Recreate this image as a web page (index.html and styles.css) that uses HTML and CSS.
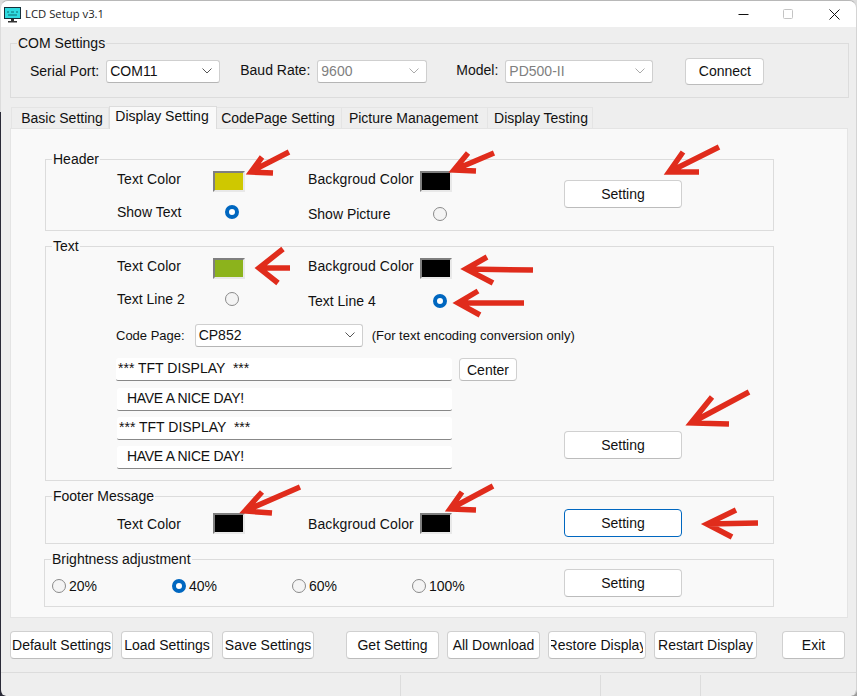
FILE: index.html
```html
<!DOCTYPE html>
<html lang="en">
<head>
<meta charset="utf-8">
<title>LCD Setup v3.1</title>
<link rel="stylesheet" href="styles.css">
</head>
<body>
<div class="window">
  <header class="titlebar">
    <svg class="appicon" width="17" height="16" viewBox="0 0 17 16"><rect x="0.5" y="0.5" width="16" height="11" fill="#2fdbe0" stroke="#17303a"/><path d="M3 5h2M7 5h3M12 5h2M4 8h9" stroke="#0d6b70" stroke-width="1"/><rect x="7" y="12" width="3" height="2" fill="#333"/><rect x="4" y="14" width="9" height="1.5" fill="#333"/></svg>
    <span class="title">LCD Setup v3.1</span>
    <div class="winctl">
      <svg width="11" height="11" viewBox="0 0 11 11"><path d="M0.5 5.5h10" stroke="#111" stroke-width="1"/></svg>
      <svg class="wmax" width="11" height="11" viewBox="0 0 11 11"><rect x="1.5" y="0.5" width="9" height="9" rx="1" fill="none" stroke="#c4c4c4"/></svg>
      <svg class="wclose" width="11" height="11" viewBox="0 0 11 11"><path d="M0.5 0.5l10 10M10.5 0.5l-10 10" stroke="#111" stroke-width="1"/></svg>
    </div>
  </header>

  <section class="group com">
    <div class="legend">COM Settings</div>
    <div class="comrow">
      <span class="lbl serial">Serial Port:</span>
      <div class="combo c-serial"><span>COM11</span><svg class="chev" width="10" height="6" viewBox="0 0 10 6"><path d="M0.5 0.5l4.5 4.5 4.5-4.5" fill="none" stroke="#555"/></svg></div>
      <span class="lbl baud">Baud Rate:</span>
      <div class="combo c-baud disabled"><span>9600</span><svg class="chev" width="10" height="6" viewBox="0 0 10 6"><path d="M0.5 0.5l4.5 4.5 4.5-4.5" fill="none" stroke="#aaa"/></svg></div>
      <span class="lbl model">Model:</span>
      <div class="combo c-model disabled"><span>PD500-II</span><svg class="chev" width="10" height="6" viewBox="0 0 10 6"><path d="M0.5 0.5l4.5 4.5 4.5-4.5" fill="none" stroke="#aaa"/></svg></div>
      <div class="btn connect">Connect</div>
    </div>
  </section>

  <nav class="tabs">
    <div class="tab t1">Basic Setting</div>
    <div class="tab t2 active">Display Setting</div>
    <div class="tab t3">CodePage Setting</div>
    <div class="tab t4">Picture Management</div>
    <div class="tab t5">Display Testing</div>
  </nav>

  <main class="panel">
    <section class="group inner g-header">
      <div class="legend">Header</div>
      <div class="fields">
        <span class="lbl up">Text Color</span><div class="swatch yellow"></div>
        <span class="lbl up">Backgroud Color</span><div class="swatch black"></div>
        <div class="btn setting s-header">Setting</div>
        <span class="lbl low">Show Text</span><div class="radio on low-r"></div>
        <span class="lbl low2">Show Picture</span><div class="radio low2-r"></div>
      </div>
    </section>

    <section class="group inner g-text">
      <div class="legend">Text</div>
      <div class="fields">
        <span class="lbl up">Text Color</span><div class="swatch green"></div>
        <span class="lbl up">Backgroud Color</span><div class="swatch black"></div>
        <span class="lbl low">Text Line 2</span><div class="radio low-r"></div>
        <span class="lbl low2">Text Line 4</span><div class="radio on low2-r"></div>
      </div>
      <div class="coderow">
        <span class="lbl small">Code Page:</span>
        <div class="combo c-code"><span>CP852</span><svg class="chev" width="10" height="6" viewBox="0 0 10 6"><path d="M0.5 0.5l4.5 4.5 4.5-4.5" fill="none" stroke="#555"/></svg></div>
        <span class="lbl small note">(For text encoding conversion only)</span>
      </div>
      <div class="lines">
        <div class="lineblock">
          <div class="line first">*** TFT DISPLAY  ***</div>
          <div class="line ind second">HAVE A NICE DAY!</div>
          <div class="line">*** TFT DISPLAY  ***</div>
          <div class="line ind">HAVE A NICE DAY!</div>
        </div>
        <div class="btn center">Center</div>
        <div class="btn setting s-text">Setting</div>
      </div>
    </section>

    <section class="group inner g-footer">
      <div class="legend">Footer Message</div>
      <div class="fields">
        <span class="lbl up">Text Color</span><div class="swatch black"></div>
        <span class="lbl up">Backgroud Color</span><div class="swatch black"></div>
        <div class="btn setting s-footer focus">Setting</div>
      </div>
    </section>

    <section class="group inner g-bright">
      <div class="legend">Brightness adjustment</div>
      <div class="brow">
        <label class="opt"><span class="radio"></span><span class="lbl">20%</span></label>
        <label class="opt"><span class="radio on"></span><span class="lbl">40%</span></label>
        <label class="opt"><span class="radio"></span><span class="lbl">60%</span></label>
        <label class="opt"><span class="radio"></span><span class="lbl">100%</span></label>
        <div class="btn setting s-bright">Setting</div>
      </div>
    </section>
  </main>

  <div class="actions">
    <div class="btn b103">Default Settings</div>
    <div class="btn b92">Load Settings</div>
    <div class="btn b92 m1">Save Settings</div>
    <div class="btn b93 m24">Get Setting</div>
    <div class="btn b93">All Download</div>
    <div class="btn b98"><span class="clip">Restore Display</span></div>
    <div class="btn b103">Restart Display</div>
    <div class="btn b63 m17">Exit</div>
  </div>

  <footer class="status">
    <div class="cell c400"></div>
    <div class="cell c200"></div>
    <div class="cell c100"></div>
    <div class="cell"></div>
  </footer>

  <svg class="arrows" width="857" height="696" viewBox="0 0 857 696" fill="none" stroke="#e02c1c" stroke-width="5.5" stroke-linecap="butt" stroke-linejoin="miter">
    <path d="M289 152L252 171M262 157L251 172L273 173"/>
    <path d="M494 153L454 170M468 153L454 170L476 171"/>
    <path d="M719 147L669 172M683 152L669 172L699 172"/>
    <path d="M290 268L259 268M283 249L259 268L278 283"/>
    <path d="M533 270L466 269M487 257L466 269L493 283"/>
    <path d="M524 303L458 303M478 291L458 303L480 315"/>
    <path d="M749 392L691 423M712 397L691 423L729 424"/>
    <path d="M300 487L245 511M262 492L245 511L272 513"/>
    <path d="M493 486L450 509M462 492L450 509L476 510"/>
    <path d="M758 523L707 524M736 510L707 524L732 537"/>
  </svg>
</div>
</body>
</html>
```
FILE: styles.css
```css
* { box-sizing: border-box; }
html, body { margin: 0; padding: 0; }
body { width: 857px; height: 696px; overflow: hidden; font-family: "Liberation Sans", Arial, sans-serif; font-size: 14px; color: #111; background: linear-gradient(#dcdcdc 0 112px, transparent 112px), linear-gradient(90deg, #2b2b38 50%, #9a9a9a 50%); }
.window { position: relative; width: 857px; height: 696px; background: #eeeeee; background-clip: padding-box; border-radius: 8px 8px 6px 6px; border-top: 1px solid #b8b8b8; border-left: 1px solid transparent; border-right: 1px solid #d4d4d4; overflow: hidden; display: flex; flex-direction: column; }

.titlebar { height: 26px; flex: none; background: #fff; display: flex; align-items: center; padding-left: 3px; }
.appicon { flex: none; margin-top: 1px; }
.title { margin-left: 4px; margin-bottom: 1px; font-family: "Open Sans", sans-serif; font-size: 11.3px; color: #222; }
.winctl { margin-left: auto; display: flex; padding-right: 16px; }
.wmax { margin-left: 33px; }
.wclose { margin-left: 36px; }

.group { border: 1px solid #dcdcdc; }
.legend { display: block; width: fit-content; height: 16px; line-height: 16px; margin: -9px 0 0 6px; padding: 0 1px; background: #eeeeee; white-space: nowrap; }
.lbl { white-space: nowrap; }

.com { margin: 16px 7px 0 9px; height: 55px; flex: none; }
.comrow { display: flex; align-items: center; padding-left: 19px; height: 26px; margin-top: 7px; }
.combo { height: 23px; border: 1px solid #cfcfcf; border-bottom-color: #b5b5b5; border-radius: 3px; background: #fff; display: flex; align-items: center; justify-content: space-between; padding: 0 7px 0 3px; flex: none; }
.combo.disabled { color: #808080; }
.chev { flex: none; }
.serial { margin-right: 7px; }
.c-serial { width: 114px; }
.baud { margin-left: 20px; margin-right: 7px; margin-bottom: 2px; }
.c-baud { width: 110px; }
.model { margin-left: 29px; margin-right: 7px; margin-bottom: 2px; }
.c-model { width: 148px; }
.btn { display: flex; align-items: center; justify-content: center; background: #fff; border: 1px solid #d0d0d0; border-bottom-color: #bcbcbc; border-radius: 4px; white-space: nowrap; overflow: hidden; flex: none; }
.clip { width: 92px; flex: none; display: flex; justify-content: center; overflow: hidden; white-space: nowrap; }
.connect { width: 79px; height: 27px; margin-left: 32px; }

.tabs { display: flex; margin: 8px 0 0 10px; height: 22px; align-items: flex-end; flex: none; position: relative; z-index: 1; }
.tab { height: 21px; border: 1px solid #e4e4e4; border-bottom: none; border-left: none; display: flex; align-items: center; justify-content: center; background: #eeeeee; white-space: nowrap; }
.tab.t1 { width: 98px; border-left: 1px solid #e4e4e4; padding-left: 4px; }
.t2 { width: 108px; }
.t3 { width: 125px; padding-right: 2px; }
.t4 { width: 146px; padding-right: 2px; }
.t5 { width: 105px; padding-left: 2px; }
.tab.active { height: 23px; margin-bottom: -1px; background: #f9f9f9; padding-bottom: 5px; padding-right: 2px; border-left: 1px solid #dcdcdc; border-right: 1px solid #dcdcdc; border-top-color: #dcdcdc; }

.panel { margin-left: 9px; width: 838px; height: 490px; flex: none; background: #f9f9f9; border: 1px solid #e4e4e4; padding: 30px 0 0 34px; }
.inner { width: 729px; }
.inner .legend { background: #f9f9f9; }

.fields { display: grid; grid-template-columns: 96px 95px 112px 144px 118px; grid-template-rows: 21px auto; padding-left: 71px; margin-top: 4px; }
.up { margin-top: 0; line-height: 16px; letter-spacing: 0.1px; }
.swatch { width: 32px; height: 21px; border: 2px solid; border-color: #7f7f7f #e8e8e8 #e8e8e8 #7f7f7f; }
.yellow { background: #cfc800; }
.green { background: #8cb31c; }
.black { background: #000; }
.low { grid-column: 1; margin-top: 12px; line-height: 16px; }
.low2 { grid-column: 3; margin-top: 14px; line-height: 16px; }
.radio { display: block; width: 14px; height: 14px; border-radius: 50%; border: 1px solid #8a8a8a; background: #f4f4f4; flex: none; }
.radio.on { border: 4px solid #0067c0; background: #fff; }
.low-r { grid-column: 2; margin: 13px 0 0 12px; }
.low2-r { grid-column: 4; margin: 15px 0 0 13px; }

.setting { width: 118px; height: 28px; }
.s-header { grid-column: 5; grid-row: 1 / 3; margin-top: 9px; }
.g-header { height: 72px; }
.g-text { height: 235px; margin-top: 15px; }
.coderow { display: flex; align-items: center; margin: 14px 0 0 70px; height: 24px; }
.small { font-size: 13px; }
.c-code { width: 168px; margin-left: 10px; margin-right: 9px; font-size: 14px; }
.lines { display: flex; align-items: flex-start; margin: 11px 0 0 70px; }
.lineblock { width: 337px; }
.line { height: 23px; background: #fff; border-bottom: 1px solid #888; border-radius: 3px 3px 2px 2px; white-space: pre; line-height: 21px; margin: 6px 0 0 1px; padding-left: 2px; width: 335px; }
.line.first { margin: 0; width: 336px; }
.line.second { margin-top: 7px; }
.line.ind { padding-left: 10px; letter-spacing: -0.3px; }
.center { width: 58px; height: 23px; margin-left: 6px; }
.s-text { margin-left: 47px; margin-top: 73px; }

.g-footer { height: 48px; margin-top: 15px; }
.g-footer .fields { margin-top: 9px; }
.g-footer .up { margin-top: 3px; }
.g-footer .s-footer { grid-column: 5; grid-row: 1; margin-top: -4px; }
.focus { border: 1px solid #0067c0; }
.g-bright { height: 48px; margin-top: 15px; margin-left: -1px; width: 730px; }
.brow { display: flex; align-items: center; padding-left: 7px; height: 28px; margin-top: 2px; }
.opt { display: flex; align-items: center; gap: 3px; width: 120px; flex: none; margin-top: 6px; }
.s-bright { margin-left: 32px; }

.actions { display: flex; gap: 8px; margin: 13px 0 0 9px; height: 28px; flex: none; }
.b103 { width: 103px; }
.b92 { width: 92px; }
.b93 { width: 93px; }
.b98 { width: 98px; }
.b63 { width: 63px; }
.m1 { margin-left: 1px; }
.m24 { margin-left: 24px; }
.m17 { margin-left: 17px; }

.status { margin-top: 13px; border-top: 1px solid #dcdcdc; flex: 1; display: flex; padding-top: 2px; }
.cell { border-right: 1px solid #dcdcdc; }
.c400 { width: 399px; margin-left: 1px; }
.c200 { width: 200px; }
.c100 { width: 100px; }
.cell:last-child { border: none; }

.arrows { position: absolute; left: -1px; top: -1px; pointer-events: none; }
```
